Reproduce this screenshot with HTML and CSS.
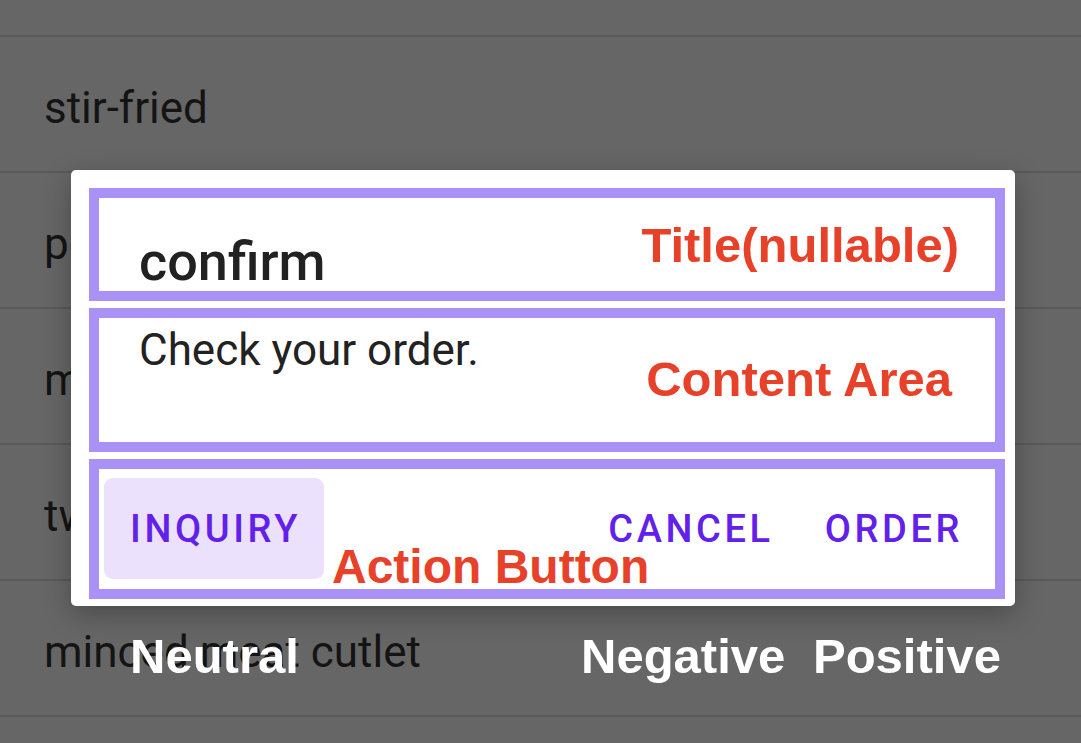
FILE: index.html
```html
<!DOCTYPE html>
<html lang="en">
<head>
<meta charset="utf-8">
<title>Dialog anatomy</title>
<link rel="stylesheet" href="styles.css">
</head>
<body>
<div class="screen">
  <ul class="list">
    <li class="row row-partial"></li>
    <li class="row">stir-fried</li>
    <li class="row">pork cutlet</li>
    <li class="row">mapo tofu</li>
    <li class="row">twice-cooked pork</li>
    <li class="row">minced meat cutlet</li>
    <li class="row row-last"></li>
  </ul>

  <div class="dialog">
    <section class="area area-title">
      <h1 class="title">confirm</h1>
      <span class="note note-title">Title(nullable)</span>
    </section>
    <section class="area area-content">
      <p class="message">Check your order.</p>
      <span class="note note-content">Content Area</span>
    </section>
    <section class="area area-actions">
      <button class="btn btn-neutral">INQUIRY</button>
      <span class="note note-actions">Action Button</span>
      <div class="spacer"></div>
      <button class="btn">CANCEL</button>
      <button class="btn">ORDER</button>
    </section>
  </div>

  <span class="caption caption-neutral">Neutral</span>
  <span class="caption caption-negative">Negative</span>
  <span class="caption caption-positive">Positive</span>
</div>
</body>
</html>
```

FILE: styles.css
```css
* { box-sizing: border-box; }

html, body {
  margin: 0;
  padding: 0;
  width: 1081px;
  height: 743px;
  overflow: hidden;
  background: #666666;
}

.screen {
  position: relative;
  width: 1081px;
  height: 743px;
  overflow: hidden;
  font-family: Roboto, "Noto Sans", sans-serif;
}

.list {
  list-style: none;
  margin: 0;
  padding: 0;
  display: flex;
  flex-direction: column;
}

.row {
  height: 136px;
  flex: none;
  border-bottom: 2px solid #595959;
  display: flex;
  align-items: center;
  padding: 7px 0 0 44px;
  font-size: 44px;
  color: #141414;
}

.row-partial { height: 37px; padding: 0; }
.row-last { height: 26px; border-bottom: 0; }

.dialog {
  position: absolute;
  left: 71px;
  top: 170px;
  width: 944px;
  height: 436px;
  background: #ffffff;
  border-radius: 5px;
  box-shadow: 0 8px 28px rgba(0, 0, 0, 0.28);
  padding: 18px 10px 7px 18px;
  display: flex;
  flex-direction: column;
  gap: 7px;
}

.area {
  border: 10px solid #aa91f5;
  display: flex;
  position: relative;
}

.area-title {
  height: 113px;
  justify-content: space-between;
  align-items: flex-start;
  padding: 0 36px 0 40px;
}

.area-content {
  height: 144px;
  justify-content: space-between;
  align-items: flex-start;
  padding: 0 43px 0 40px;
}

.area-actions {
  height: 140px;
  align-items: stretch;
  padding: 9px 8px 10px 5px;
}

.title {
  margin: 32px 0 0;
  font-size: 54px;
  line-height: 64px;
  font-weight: 500;
  color: #212121;
}

.message {
  margin: 6px 0 0;
  font-size: 44px;
  line-height: 52px;
  color: #222222;
}

.note {
  font-family: "Liberation Sans", Arial, sans-serif;
  font-weight: bold;
  font-size: 48px;
  line-height: 56px;
  color: #e8412a;
  white-space: nowrap;
}

.note-title { margin-top: 19px; font-size: 49px; }
.note-content { margin-top: 33px; font-size: 49px; }

.note-actions {
  position: absolute;
  left: 233px;
  top: 70px;
}

.spacer { flex: 1; }

.btn {
  border: 0;
  margin: 0;
  background: transparent;
  padding: 0 24px 0 27px;
  font-family: Roboto, "Noto Sans", sans-serif;
  font-weight: 500;
  font-size: 38px;
  letter-spacing: 3.6px;
  color: #6221ea;
  display: flex;
  align-items: center;
  justify-content: center;
  border-radius: 9px;
}

.btn-neutral {
  width: 220px;
  background: #ebe1fd;
}

.caption {
  position: absolute;
  top: 628px;
  font-family: "Liberation Sans", Arial, sans-serif;
  font-weight: bold;
  font-size: 49px;
  line-height: 56px;
  color: #ffffff;
  white-space: nowrap;
}

.caption-neutral { left: 130px; }
.caption-negative { left: 581px; }
.caption-positive { left: 813px; }
```
